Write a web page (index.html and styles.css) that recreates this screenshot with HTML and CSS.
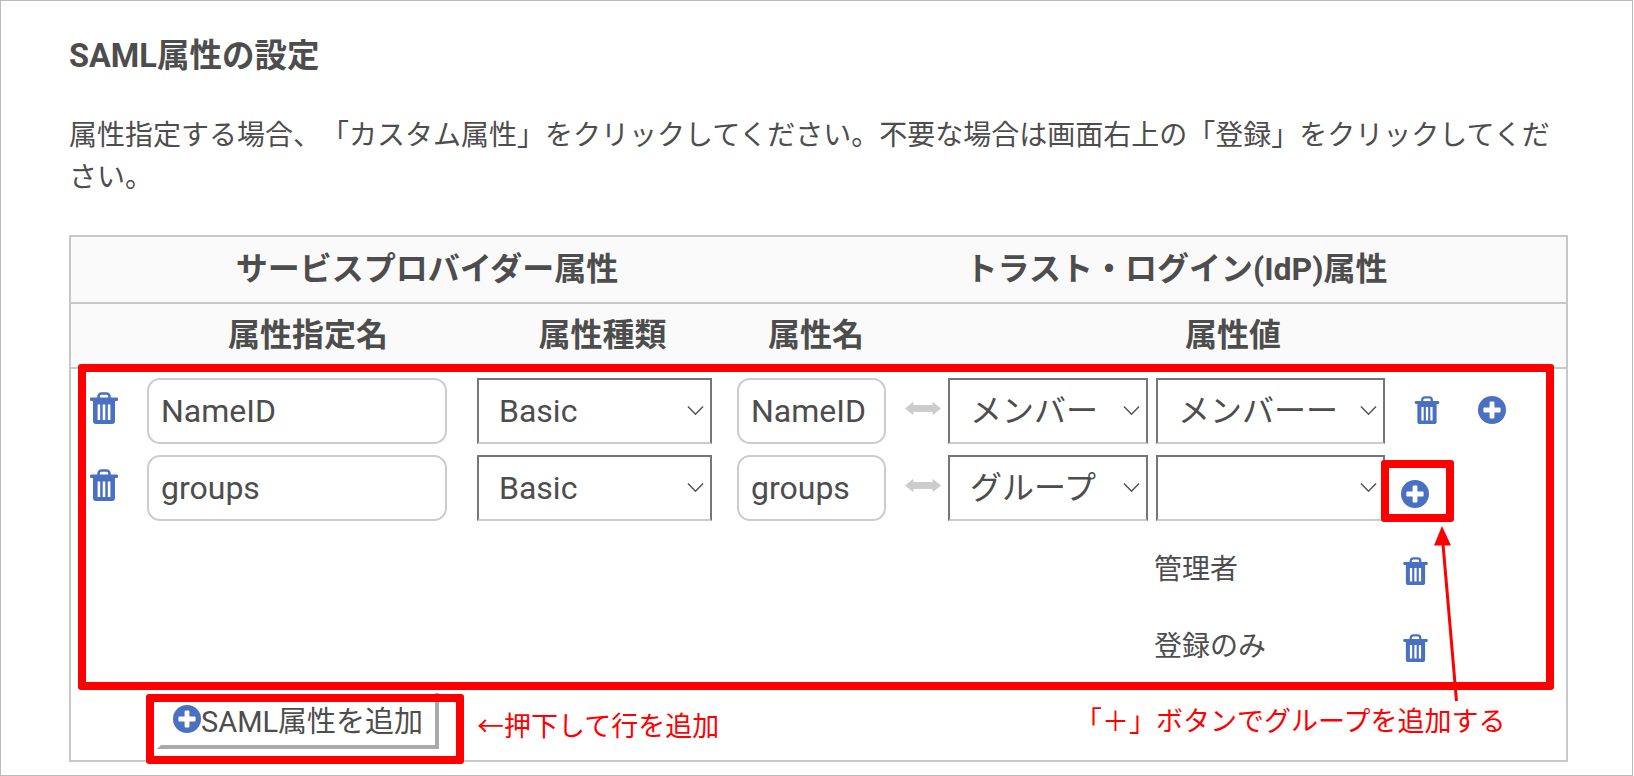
FILE: index.html
```html
<!DOCTYPE html>
<html lang="ja">
<head>
<meta charset="utf-8">
<title>SAML属性の設定</title>
<link rel="stylesheet" href="styles.css">
</head>
<body>
<svg class="defs" width="0" height="0" aria-hidden="true">
  <symbol id="i-trash" viewBox="0 0 28 32">
    <path d="M8.5 7V4.5A3 3 0 0 1 11.5 1.5h5a3 3 0 0 1 3 3V7" fill="none" stroke="currentColor" stroke-width="2.6"/>
    <rect x="0" y="5.6" width="28" height="3.4" rx="1.2" fill="currentColor"/>
    <path fill="currentColor" fill-rule="evenodd" d="M3 9h22v20a3 3 0 0 1-3 3H6a3 3 0 0 1-3-3zM7.6 12.5v15.5h2.6V12.5zM12.7 12.5v15.5h2.6V12.5zM17.8 12.5v15.5h2.6V12.5z"/>
  </symbol>
  <symbol id="i-plus" viewBox="0 0 28 28">
    <circle cx="14" cy="14" r="14" fill="currentColor"/>
    <path fill="#fff" d="M11.6 6.4a1 1 0 0 1 1-1h2.8a1 1 0 0 1 1 1v5.2h5.2a1 1 0 0 1 1 1v2.8a1 1 0 0 1-1 1h-5.2v5.2a1 1 0 0 1-1 1h-2.8a1 1 0 0 1-1-1v-5.2H6.4a1 1 0 0 1-1-1v-2.8a1 1 0 0 1 1-1h5.2z"/>
  </symbol>
  <symbol id="i-link" viewBox="0 0 36 13">
    <path fill="currentColor" stroke="currentColor" stroke-width="1" stroke-linejoin="round" d="M.6 6.5L8 .6v3h20v-3l7.4 5.9L28 12.4v-3H8v3z"/>
  </symbol>
  <symbol id="i-chev" viewBox="0 0 18 11">
    <path d="M1 1.2L9 9.5l8-8.3" fill="none" stroke="currentColor" stroke-width="1.6"/>
  </symbol>
</svg>

<main class="frame">
  <h2 class="title">SAML属性の設定</h2>
  <p class="lead">属性指定する場合、「カスタム属性」をクリックしてください。不要な場合は画面右上の「登録」をクリックしてください。</p>

  <div class="table">
    <div class="head head-top">
      <div class="head-sp">サービスプロバイダー属性</div>
      <div class="head-idp">トラスト・ログイン(IdP)属性</div>
    </div>
    <div class="head head-sub">
      <div class="col-a">属性指定名</div>
      <div class="col-b">属性種類</div>
      <div class="col-c">属性名</div>
      <div class="col-d">属性値</div>
    </div>

    <div class="body">
      <div class="row">
        <svg class="icon trash trash-left"><use href="#i-trash"/></svg>
        <input class="field field-name" value="NameID">
        <div class="sel sel-type"><select><option>Basic</option></select><svg class="chev"><use href="#i-chev"/></svg></div>
        <input class="field field-attr" value="NameID">
        <svg class="link"><use href="#i-link"/></svg>
        <div class="sel sel-src"><select><option>メンバー</option></select><svg class="chev"><use href="#i-chev"/></svg></div>
        <div class="sel sel-val"><select><option>メンバーー</option></select><svg class="chev"><use href="#i-chev"/></svg></div>
        <svg class="icon trash trash-right"><use href="#i-trash"/></svg>
        <svg class="icon plus plus-right"><use href="#i-plus"/></svg>
      </div>
      <div class="row">
        <svg class="icon trash trash-left"><use href="#i-trash"/></svg>
        <input class="field field-name" value="groups">
        <div class="sel sel-type"><select><option>Basic</option></select><svg class="chev"><use href="#i-chev"/></svg></div>
        <input class="field field-attr" value="groups">
        <svg class="link"><use href="#i-link"/></svg>
        <div class="sel sel-src"><select><option>グループ</option></select><svg class="chev"><use href="#i-chev"/></svg></div>
        <div class="sel sel-val"><select><option></option></select><svg class="chev"><use href="#i-chev"/></svg></div>
        <svg class="icon plus plus-group"><use href="#i-plus"/></svg>
      </div>

      <ul class="groups">
        <li class="group"><span class="group-name">管理者</span><svg class="icon trash-small"><use href="#i-trash"/></svg></li>
        <li class="group"><span class="group-name">登録のみ</span><svg class="icon trash-small"><use href="#i-trash"/></svg></li>
      </ul>

      <div class="foot">
        <button class="add" type="button"><svg class="icon plus"><use href="#i-plus"/></svg>SAML属性を追加</button>
      </div>
    </div>

    <div class="mark mark-rows"></div>
    <div class="mark mark-plus"></div>
    <div class="mark mark-add"></div>
    <span class="note note-add">←押下して行を追加</span>
    <span class="note note-plus">「＋」ボタンでグループを追加する</span>
    <svg class="pointer" width="40" height="190" viewBox="0 0 40 190">
      <path d="M31.5 181L18 24" fill="none" stroke="#f00" stroke-width="3"/>
      <path d="M17 6L9 25.5h17z" fill="#f00"/>
    </svg>
  </div>
</main>
</body>
</html>
```
FILE: styles.css
```css
* { box-sizing: border-box; }
html, body { margin: 0; padding: 0; background: #fff; }
body {
  width: 1634px;
  height: 776px;
  overflow: hidden;
  font-family: Roboto, "Noto Sans CJK JP", sans-serif;
  color: #4d4d4d;
  text-spacing-trim: space-all;
}
.defs { position: absolute; }

.frame {
  width: 1633px;
  height: 776px;
  border: 1px solid #bbb;
  padding: 31px 65px 0 68px;
}
.title {
  margin: 0;
  font-size: 32.5px;
  line-height: 48px;
  font-weight: 700;
}
.lead {
  margin: 35px 0 36px;
  font-size: 28px;
  line-height: 42px;
}

.table {
  position: relative;
  width: 1499px;
  height: 527px;
  border: 2px solid #c8c8c8;
}
.head {
  display: flex;
  background: #fafafa;
  border-bottom: 2px solid #c8c8c8;
  font-size: 32px;
  font-weight: 700;
  text-align: center;
  align-items: center;
  padding-bottom: 8px;
}
.head-top { height: 67px; }
.head-sp { width: 712px; }
.head-idp { width: 777px; margin-left: 5px; }
.head-sub { height: 65px; padding-left: 77px; }
.col-a { width: 320px; }
.col-b { width: 251px; margin-left: 9px; }
.col-c { width: 176px; }
.col-d { width: 570px; margin-left: 44px; }

.body { padding-top: 9px; }
.row {
  display: flex;
  align-items: flex-start;
  height: 66px;
  margin-bottom: 11px;
  padding-left: 19px;
}
.icon { display: block; flex: none; color: #4a70c1; }
.trash { width: 28px; height: 32px; }
.trash-left { margin-top: 14px; margin-right: 29px; }
.trash-right { width: 26px; height: 28px; margin: 18px 0 0 29px; }
.plus { width: 28px; height: 28px; }
.plus-right { margin: 18px 0 0 38px; }
.plus-group { margin: 25px 0 0 16px; }

.field {
  display: block;
  flex: none;
  height: 66px;
  border: 2px solid #ccc;
  border-radius: 13px;
  padding: 0 12px;
  font: 32px Roboto, "Noto Sans CJK JP", sans-serif;
  color: #4d4d4d;
  background: #fff;
  outline: none;
}
.field-name { width: 300px; margin-right: 30px; }
.field-attr { width: 149px; margin-left: 25px; }

.sel { position: relative; flex: none; height: 66px; }
.sel select {
  display: block;
  width: 100%;
  height: 100%;
  appearance: none;
  -webkit-appearance: none;
  border: 2px solid #767676;
  border-bottom-color: #ccc;
  border-radius: 0;
  background: #fff;
  padding: 0 30px 0 20px;
  font: 32px Roboto, "Noto Sans CJK JP", sans-serif;
  color: #4d4d4d;
  outline: none;
}
.chev {
  position: absolute;
  right: 8px;
  top: 27px;
  width: 17px;
  height: 11px;
  color: #555;
  pointer-events: none;
}
.sel-type { width: 235px; }
.sel-src { width: 200px; }
.sel-val { width: 229px; margin-left: 8px; }
.link { flex: none; width: 36px; height: 13px; margin: 24px 7px 0 19px; color: #ccc; }

.groups {
  list-style: none;
  margin: 0;
  padding: 0 0 0 1083px;
}
.group {
  display: flex;
  align-items: center;
  height: 77px;
  font-size: 28px;
}
.group-name { width: 249px; position: relative; top: -4px; }
.trash-small { width: 25px; height: 28px; }

.foot { padding: 7px 0 0 86px; }
.add {
  display: flex;
  align-items: center;
  width: 282px;
  height: 56px;
  padding: 0 0 0 12px;
  background: #fff padding-box;
  border-style: solid;
  border-width: 0 4px 4px 4px;
  border-color: transparent #aaa #aaa transparent;
  font: 29px Roboto, "Noto Sans CJK JP", sans-serif;
  color: #4d4d4d;
}

.mark {
  position: absolute;
  border: 8px solid #f00;
  border-radius: 3px;
}
.mark-rows { left: 7px; top: 127px; width: 1476px; height: 326px; }
.mark-plus { left: 1310px; top: 223px; width: 73px; height: 62px; }
.mark-add { left: 75px; top: 457px; width: 318px; height: 70px; }

.note {
  position: absolute;
  color: #f00;
  white-space: nowrap;
}
.note-add { left: 406px; top: 470px; font-size: 27px; line-height: 40px; }
.note-plus { left: 1004px; top: 465px; font-size: 27px; line-height: 40px; }
.pointer { position: absolute; left: 1354px; top: 283px; }
```
